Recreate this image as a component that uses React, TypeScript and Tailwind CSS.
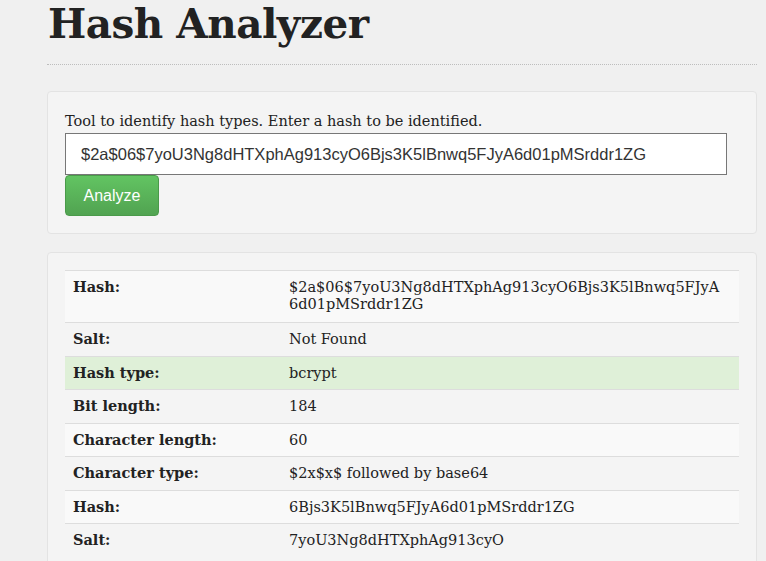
const HASH = '$2a$06$7yoU3Ng8dHTXphAg913cyO6Bjs3K5lBnwq5FJyA6d01pMSrddr1ZG'

type Row = { label: string; value: string; tone: 'stripe' | 'plain' | 'success' }

const rows: Row[] = [
    { label: 'Hash:', value: HASH, tone: 'stripe' },
    { label: 'Salt:', value: 'Not Found', tone: 'plain' },
    { label: 'Hash type:', value: 'bcrypt', tone: 'success' },
    { label: 'Bit length:', value: '184', tone: 'plain' },
    { label: 'Character length:', value: '60', tone: 'stripe' },
    { label: 'Character type:', value: '$2x$x$ followed by base64', tone: 'plain' },
    { label: 'Hash:', value: '6Bjs3K5lBnwq5FJyA6d01pMSrddr1ZG', tone: 'stripe' },
    { label: 'Salt:', value: '7yoU3Ng8dHTXphAg913cyO', tone: 'plain' },
]

const toneClass = {
    stripe: 'bg-[#f9f9f9]',
    plain: 'bg-transparent',
    success: 'bg-[#dff0d8]',
}

function App() {
    return (
        <div className="min-h-screen bg-[#f0f0f0] font-['DejaVu_Serif',serif] text-[#222]">
            <div className="ml-[47px] w-[710px]">
                <h1 className="pt-[3px] pl-px text-[40.5px] leading-[43px] font-bold tracking-[-0.5px]">
                    Hash Analyzer
                </h1>
                <div className="mt-[18px] border-b border-dotted border-[#bdbdbd]" />

                <div className="mt-[26px] rounded-[4px] border border-[#e3e3e3] bg-[#f4f4f4] px-[17px] pt-[17px] pb-[17px]">
                    <p className="text-[14.5px] leading-[24px]">
                        Tool to identify hash types. Enter a hash to be identified.
                    </p>
                    <input
                        readOnly
                        value={HASH}
                        className="block h-[42px] w-[662px] border border-[#777] bg-white px-[15px] font-['Liberation_Sans',sans-serif] text-[16.5px] text-[#333] outline-none"
                    />
                    <button className="block h-[41px] w-[94px] rounded-[4px] border border-[#4a9a4a] bg-gradient-to-b from-[#62c462] to-[#51a351] font-['Liberation_Sans',sans-serif] text-[16px] text-white">
                        Analyze
                    </button>
                </div>

                <div className="mt-[18px] rounded-[4px] border border-[#e3e3e3] bg-[#f4f4f4] px-[17px] pt-[17px] pb-[17px]">
                    <table className="w-[674px] border-collapse text-[14.5px] leading-[16.5px]">
                        <tbody>
                            {rows.map((r, i) => (
                                <tr key={i} className={`${toneClass[r.tone]} border-t border-[#dddddd]`}>
                                    <td className="w-[216px] px-[8px] pt-[8px] pb-[8px] align-top font-bold">
                                        {r.label}
                                    </td>
                                    <td
                                        className={`pl-[8px] pr-[12px] pt-[8px] align-top break-all ${
                                            i === 0 ? 'pb-[10px]' : 'pb-[8px]'
                                        }`}
                                    >
                                        {r.value}
                                    </td>
                                </tr>
                            ))}
                        </tbody>
                    </table>
                </div>
            </div>
        </div>
    )
}

export default App
